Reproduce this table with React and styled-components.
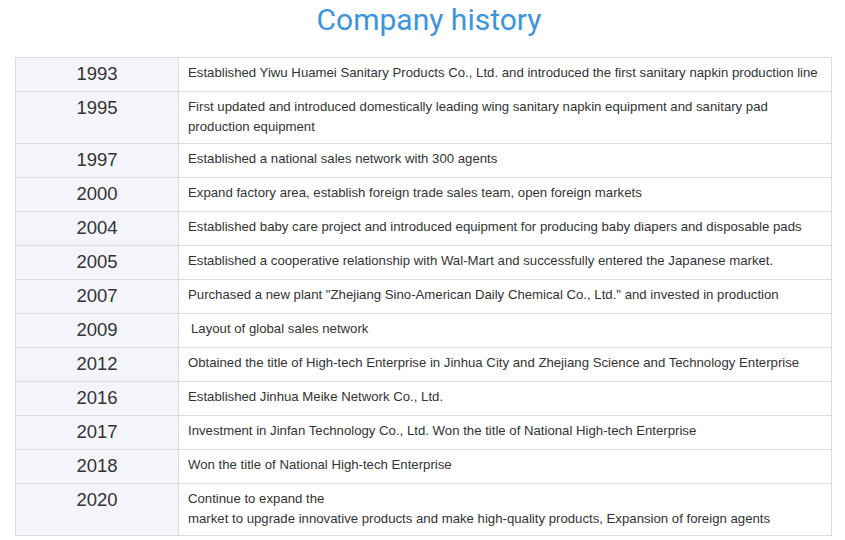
import React from "react";
import styled, { createGlobalStyle } from "styled-components";

const Global = createGlobalStyle`
  html, body { margin: 0; padding: 0; background: #fff; }
  body { font-family: "Liberation Sans", Arial, sans-serif; }
`;

const Page = styled.div`
  width: 845px;
  padding: 0 13px 0 15px;
  box-sizing: border-box;
`;

const Title = styled.h2`
  margin: 0;
  height: 57px;
  padding: 2px 0 0 11px;
  box-sizing: border-box;
  text-align: center;
  font-family: Roboto, "Liberation Sans", sans-serif;
  font-weight: 400;
  font-size: 30px;
  line-height: 36px;
  color: #3d94e0;
`;

const Table = styled.table`
  width: 817px;
  border-collapse: collapse;
  table-layout: fixed;
`;

const YearCell = styled.td`
  width: 146px;
  border: 1px solid #dcdcdc;
  background: #f3f5fa;
  color: #333;
  font-size: 18.5px;
  line-height: 22px;
  text-align: center;
  vertical-align: top;
  padding: 5px 8px 6px;
`;

const TextCell = styled.td`
  border: 1px solid #dcdcdc;
  color: #333;
  font-size: 13.2px;
  line-height: 20px;
  vertical-align: top;
  padding: 5px 10px 6px 9px;
  text-indent: ${(p) => (p.$indent ? "3px" : "0")};
`;

const rows = [
  ["1993", ["Established Yiwu Huamei Sanitary Products Co., Ltd. and introduced the first sanitary napkin production line"]],
  ["1995", ["First updated and introduced domestically leading wing sanitary napkin equipment and sanitary pad production equipment"]],
  ["1997", ["Established a national sales network with 300 agents"]],
  ["2000", ["Expand factory area, establish foreign trade sales team, open foreign markets"]],
  ["2004", ["Established baby care project and introduced equipment for producing baby diapers and disposable pads"]],
  ["2005", ["Established a cooperative relationship with Wal-Mart and successfully entered the Japanese market."]],
  ["2007", ["Purchased a new plant \"Zhejiang Sino-American Daily Chemical Co., Ltd.\" and invested in production"]],
  ["2009", ["Layout of global sales network"], true],
  ["2012", ["Obtained the title of High-tech Enterprise in Jinhua City and Zhejiang Science and Technology Enterprise"]],
  ["2016", ["Established Jinhua Meike Network Co., Ltd."]],
  ["2017", ["Investment in Jinfan Technology Co., Ltd. Won the title of National High-tech Enterprise"]],
  ["2018", ["Won the title of National High-tech Enterprise"]],
  ["2020", ["Continue to expand the", "market to upgrade innovative products and make high-quality products, Expansion of foreign agents"]],
];

export default function App() {
  return (
    <>
      <Global />
      <Page>
        <Title>Company history</Title>
        <Table>
          <tbody>
            {rows.map(([year, lines, indent]) => (
              <tr key={year}>
                <YearCell>{year}</YearCell>
                <TextCell $indent={indent}>
                  {lines.map((l, i) => (
                    <React.Fragment key={i}>
                      {i > 0 && <br />}
                      {l}
                    </React.Fragment>
                  ))}
                </TextCell>
              </tr>
            ))}
          </tbody>
        </Table>
      </Page>
    </>
  );
}
